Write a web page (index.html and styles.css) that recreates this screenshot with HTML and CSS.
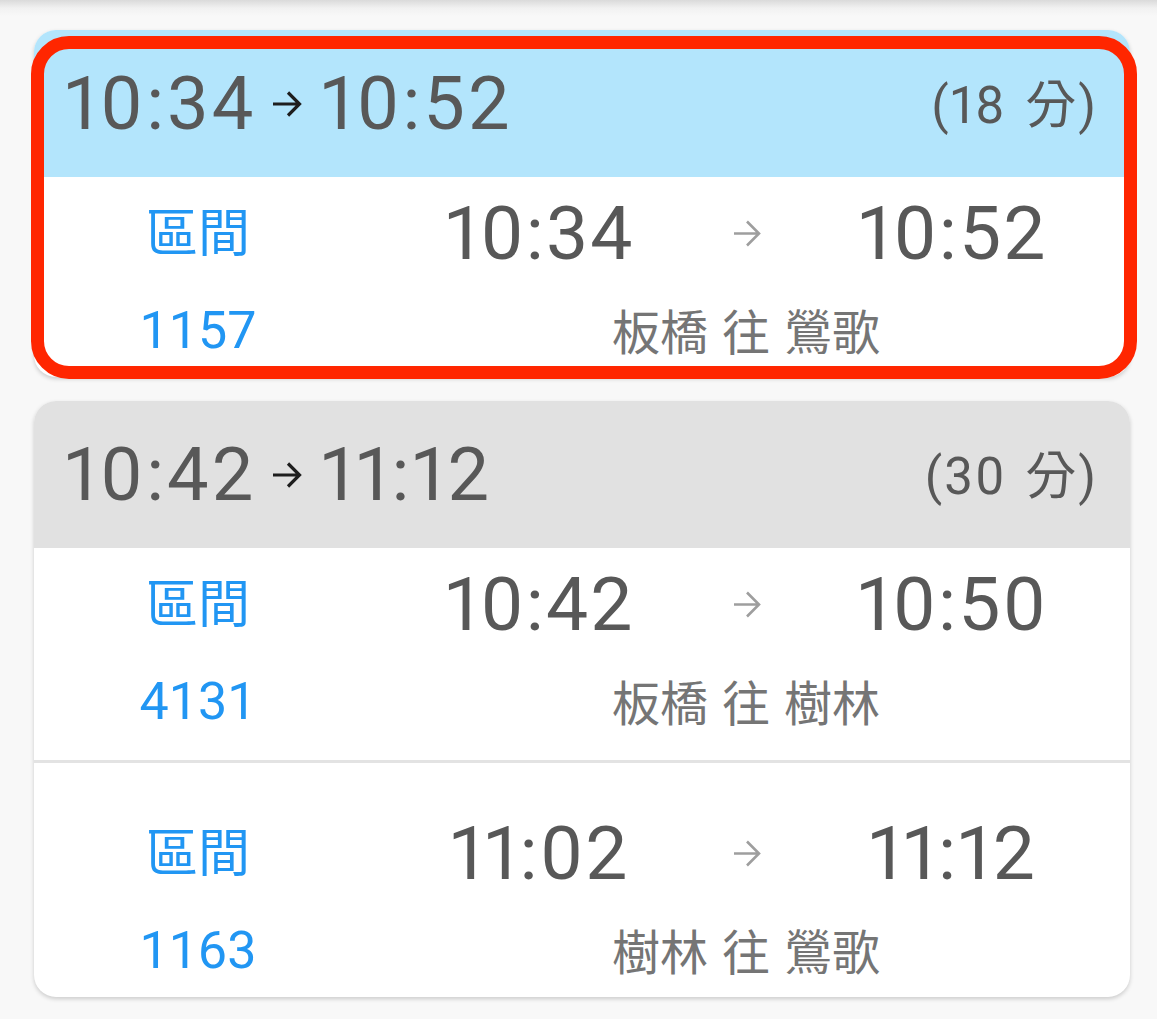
FILE: index.html
```html
<!DOCTYPE html>
<html lang="zh-Hant">
<head>
<meta charset="UTF-8">
<title>轉乘查詢</title>
<link rel="stylesheet" href="styles.css">
</head>
<body>
<div class="list">

  <!-- 直達車 -->
  <div class="card picked">
    <div class="head head-blue">
      <div class="span">
        <span>10:34</span>
        <svg class="head-arrow" viewBox="0 0 30 26"><path d="M1 13H28M16 1.5L27.5 13L16 24.5"/></svg>
        <span>10:52</span>
      </div>
      <div class="duration">(18 分)</div>
    </div>
    <div class="leg">
      <div class="train-type">區間</div>
      <div class="time">10:34</div>
      <div class="leg-arrow"><svg viewBox="0 0 28 27"><path d="M1 13.5H26M14 1.5L26 13.5L14 25.5"/></svg></div>
      <div class="time">10:52</div>
      <div class="train-no">1157</div>
      <div class="route">板橋 往 鶯歌</div>
    </div>
    <div class="mark"></div>
  </div>

  <!-- 轉乘一次 -->
  <div class="card">
    <div class="head head-gray">
      <div class="span">
        <span>10:42</span>
        <svg class="head-arrow" viewBox="0 0 30 26"><path d="M1 13H28M16 1.5L27.5 13L16 24.5"/></svg>
        <span>11:12</span>
      </div>
      <div class="duration">(30 分)</div>
    </div>
    <div class="leg leg-first">
      <div class="train-type">區間</div>
      <div class="time">10:42</div>
      <div class="leg-arrow"><svg viewBox="0 0 28 27"><path d="M1 13.5H26M14 1.5L26 13.5L14 25.5"/></svg></div>
      <div class="time">10:50</div>
      <div class="train-no">4131</div>
      <div class="route">板橋 往 樹林</div>
    </div>
    <div class="leg leg-next">
      <div class="train-type">區間</div>
      <div class="time">11:02</div>
      <div class="leg-arrow"><svg viewBox="0 0 28 27"><path d="M1 13.5H26M14 1.5L26 13.5L14 25.5"/></svg></div>
      <div class="time">11:12</div>
      <div class="train-no">1163</div>
      <div class="route">樹林 往 鶯歌</div>
    </div>
  </div>

</div>
</body>
</html>
```

FILE: styles.css
```css
body{
  margin:0;
  font-family:Roboto,"Noto Sans CJK TC",sans-serif;
  font-variant-numeric:proportional-nums;
  background:linear-gradient(to bottom,#dadada 0,#f1f1f1 8px,#f8f8f8 16px) no-repeat,#f8f8f8;
  min-height:1019px;
}

.list{
  padding:30px 27px 0 34px;
  display:flex;
  flex-direction:column;
  gap:24px;
}

.card{
  position:relative;
  background:#fff;
  border-radius:22px;
  box-shadow:0 2px 4px rgba(0,0,0,.18);
}

/* 標題列：出發 → 抵達 (時長) */
.head{
  height:147px;
  display:flex;
  align-items:center;
  justify-content:space-between;
  padding:0 32px 0 31px;
  border-radius:22px 22px 0 0;
  color:#585858;
}
.head-blue{background:#b3e5fc}
.head-gray{background:#e1e1e1}

.span{
  display:flex;
  align-items:center;
  gap:19px;
  font-size:74px;
  line-height:1;
  letter-spacing:3px;
}
.span span{margin-right:-3px}
.head-arrow{
  width:30px;
  height:26px;
  fill:none;
  stroke:#1e1e1e;
  stroke-width:3.2;
}
.duration{
  font-size:51px;
  line-height:1;
  letter-spacing:2px;
  word-spacing:4px;
  padding-top:4px;
}

/* 每一段車次 */
.leg{
  display:grid;
  grid-template-columns:328px 356px 58px 1fr;
  grid-template-rows:80px 92px;
  row-gap:12px;
  padding:16px 0 0;
  align-items:center;
  text-align:center;
  line-height:1;
}
.leg-first{
  padding-bottom:12px;
  border-bottom:3px solid #e3e3e3;
}
.leg-next{padding-top:50px}

.train-type,.train-no{
  color:#2196f3;
  font-size:52px;
}
.train-type{padding-top:4px}
.train-no{font-variant-numeric:tabular-nums}
.time{
  color:#585858;
  font-size:75px;
  letter-spacing:2px;
}
.leg-arrow{
  display:flex;
  justify-content:center;
}
.leg-arrow svg{
  width:28px;
  height:27px;
  fill:none;
  stroke:#9e9e9e;
  stroke-width:2.6;
}
.route{
  grid-column:2 / 5;
  color:#757575;
  font-size:48px;
  word-spacing:2px;
  padding-top:6px;
}

/* 紅框標記 */
.mark{
  position:absolute;
  top:6px;
  left:-3px;
  right:-7px;
  bottom:-2px;
  border:13px solid #ff2600;
  border-radius:38px;
  pointer-events:none;
}
```
